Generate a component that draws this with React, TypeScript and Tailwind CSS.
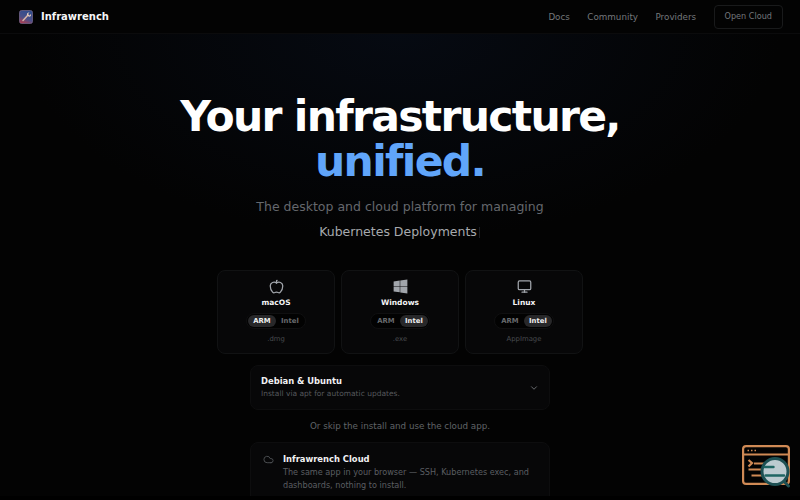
import { useState } from 'react';
import { Apple, ChevronDown, Cloud, Monitor } from 'lucide-react';

type Arch = 'ARM' | 'Intel';

const NAV_LINKS = ['Docs', 'Community', 'Providers'];
const ARCHS: Arch[] = ['ARM', 'Intel'];

function Logo() {
  return (
    <svg className="h-3.5 w-3.5" viewBox="0 0 28 28" fill="none">
      <defs>
        <linearGradient id="logo-bg" x1="20" y1="0" x2="8" y2="28" gradientUnits="userSpaceOnUse">
          <stop stopColor="#2c4c8e" />
          <stop offset="0.6" stopColor="#4c5088" />
          <stop offset="1" stopColor="#b83c4c" />
        </linearGradient>
      </defs>
      <rect x="1" y="1" width="26" height="26" rx="4" fill="url(#logo-bg)" stroke="#74658c" strokeWidth="1.5" />
      <path d="M8 21 18 10" stroke="#d9b5a6" strokeWidth="3" strokeLinecap="round" />
      <path d="m21 5-3 3 1 2 2 1 3-3c1 4-2 6-5 5l-3-3c-1-3 2-6 5-5Z" fill="#e8cdc0" />
    </svg>
  );
}

function WindowsIcon() {
  return (
    <svg className="h-[15px] w-[15px]" viewBox="0 0 24 24" fill="currentColor">
      <path d="M1 3.9 10.8 2.5v9H1ZM11.600 2.400 23 .8v10.700H11.600ZM1 12.300h9.800v9L1 19.900ZM11.600 12.300H23V23l-11.400-1.600Z" />
    </svg>
  );
}

function TerminalBadge() {
  return (
    <svg className="h-[46px] w-[52px]" viewBox="0 0 52 46" fill="none">
      <g stroke="#d08a55" strokeWidth="2.2">
        <rect x="3.1" y="4.1" width="45.8" height="37.8" rx="3" />
        <path d="M3 12.5h46" strokeWidth="1.8" />
        <path d="M7.5 8.5h1.5m2 0h1.5m2 0h1.5" strokeWidth="1.5" />
        <path d="m8.5 18 3.5 3-3.5 3.5" />
        <path d="M14 21.5h12M8.5 27.5h14M11.5 33.5h14" strokeWidth="1.9" />
      </g>
      <path d="m44 39.5 4.5 4.5" stroke="#1d5053" strokeWidth="3" strokeLinecap="round" />
      <circle cx="35" cy="29.5" r="13" fill="#bccbd0" stroke="#1d5053" strokeWidth="3" />
      <path d="M24.5 25h9M25.5 33.5h18.5" stroke="#1f6663" strokeWidth="2.4" strokeLinecap="round" />
    </svg>
  );
}

interface PlatformCardProps {
  name: string;
  format: string;
  defaultArch: Arch;
  icon: React.ReactNode;
}

function PlatformCard({ name, format, defaultArch, icon }: PlatformCardProps) {
  const [arch, setArch] = useState<Arch>(defaultArch);

  return (
    <div className="flex flex-1 flex-col items-center rounded-[8px] border border-[#111213] bg-[#070708] pt-2">
      <div className="text-[#a1a5ab]">{icon}</div>
      <h2 className="mt-[3px] text-[7.5px] leading-[11px] font-bold text-[#f4f4f5]">{name}</h2>
      <div className="mt-[5px] flex h-[16px] rounded-full border border-[#0f0f10] bg-[#020202] p-px">
        {ARCHS.map((a) => (
          <button
            key={a}
            onClick={() => setArch(a)}
            className={`rounded-full px-[5.2px] text-[6.875px] leading-[12px] font-bold ${
              arch === a ? 'bg-[#28282a] text-[#eeeeef]' : 'text-[#67696d]'
            }`}
          >
            {a}
          </button>
        ))}
      </div>
      <span className="mt-[5px] text-[6.875px] leading-[11px] text-[#484b4f]">{format}</span>
    </div>
  );
}

export default function App() {
  return (
    <div className="relative flex h-[500px] w-[800px] flex-col overflow-hidden bg-[#030303] bg-[radial-gradient(ellipse_380px_210px_at_50%_30px,#060a12,#030303)] font-['DejaVu_Sans',sans-serif] text-white">
      <header className="flex h-[34px] shrink-0 items-center justify-between border-b border-[#0b0b0c] bg-[#030303] pr-[17px] pl-[19px]">
        <div className="flex items-center gap-2">
          <Logo />
          <span className="text-[10px] font-bold text-[#f7f7f8]">Infrawrench</span>
        </div>
        <nav className="flex items-center gap-[17.5px] text-[8.75px] text-[#74777b]">
          {NAV_LINKS.map((link) => (
            <a key={link} href="#" className="pt-0.5">
              {link}
            </a>
          ))}
          <a href="#" className="flex h-6 items-center rounded-[4px] border border-[#191a1b] px-[10px] text-[8.125px]">
            Open Cloud
          </a>
        </nav>
      </header>

      <main className="flex flex-col items-center">
        <h1 className="mt-[61px] text-center text-[42.5px] leading-[44.5px] font-bold tracking-[-0.04em]">
          Your infrastructure,
          <br />
          <span className="text-[#60a5fa]">unified.</span>
        </h1>
        <p className="mt-[13px] text-[12.5px] leading-[20px] text-[#65686d]">
          The desktop and cloud platform for managing
        </p>
        <p className="mt-[5px] flex items-center pr-px text-[12.5px] leading-[20px] text-[#a7aaae]">
          Kubernetes Deployments
          <span className="ml-[2px] h-[11px] w-px bg-[#1c1f25]" />
        </p>

        {/* Downloads */}
        <section className="mt-[28px] flex h-[84px] w-[366px] gap-[6px]">
          <PlatformCard
            name="macOS"
            format=".dmg"
            defaultArch="ARM"
            icon={<Apple className="h-[15px] w-[15px]" strokeWidth={2} />}
          />
          <PlatformCard name="Windows" format=".exe" defaultArch="Intel" icon={<WindowsIcon />} />
          <PlatformCard
            name="Linux"
            format="AppImage"
            defaultArch="Intel"
            icon={<Monitor className="h-[15px] w-[15px]" strokeWidth={2} />}
          />
        </section>

        <section className="mt-[11px] flex h-[45px] w-[300px] items-center justify-between rounded-[8px] border border-[#0d0d0e] bg-[#070708] px-[10px]">
          <div>
            <h2 className="text-[8.4px] leading-[13px] font-bold text-[#f1f1f2]">Debian &amp; Ubuntu</h2>
            <p className="text-[7.5px] leading-[12px] text-[#55585c]">Install via apt for automatic updates.</p>
          </div>
          <ChevronDown className="h-[10px] w-[10px] text-[#7b7e82]" />
        </section>

        <p className="mt-[9px] text-[8.75px] leading-[14px] text-[#606367]">
          Or skip the install and use the cloud app.
        </p>

        <section className="mt-[9px] flex h-[80px] w-[300px] gap-[9px] rounded-[8px] border border-[#0d0d0e] bg-[#070708] px-[12px] pt-[10px]">
          <Cloud className="mt-[1px] h-[11px] w-[11px] shrink-0 text-[#505357]" strokeWidth={2} />
          <div>
            <h2 className="text-[8.4px] leading-[13px] font-bold text-[#f1f1f2]">Infrawrench Cloud</h2>
            <p className="text-[8.125px] leading-[12.5px] text-[#5b5e62]">
              The same app in your browser — SSH, Kubernetes exec, and dashboards, nothing to install.
            </p>
          </div>
        </section>
      </main>

      <div className="absolute right-[8px] bottom-[12px]">
        <TerminalBadge />
      </div>
      <div className="absolute inset-x-0 bottom-0 h-[4px] bg-black" />
    </div>
  );
}
